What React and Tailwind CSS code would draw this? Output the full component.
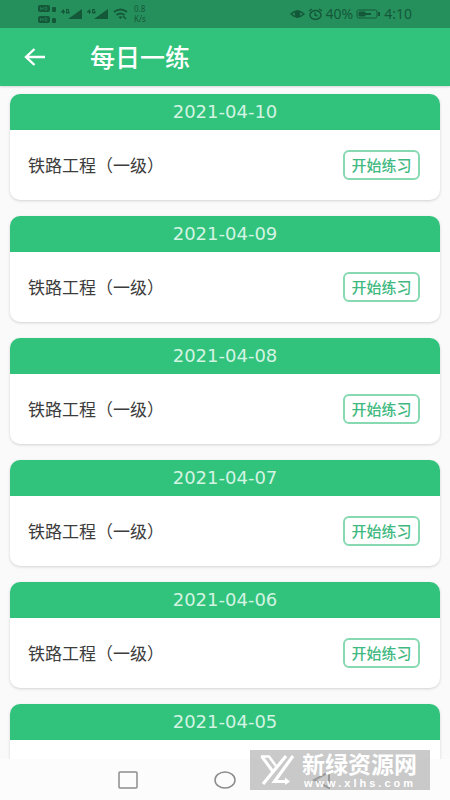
import React from 'react';

const exercises = [
    { date: '2021-04-10', title: '铁路工程（一级）' },
    { date: '2021-04-09', title: '铁路工程（一级）' },
    { date: '2021-04-08', title: '铁路工程（一级）' },
    { date: '2021-04-07', title: '铁路工程（一级）' },
    { date: '2021-04-06', title: '铁路工程（一级）' },
    { date: '2021-04-05', title: '铁路工程（一级）' },
];

const SignalIcon = () => (
    <svg width="22" height="12" viewBox="0 0 22 12" fill="currentColor" aria-hidden="true">
        <path d="M0 3.500 3 1v2h1v1.500H3V6H2V4.500H0zM5 1h3v1.500H6V4h1V3h1.500v2.500H5z" />
        <path d="M7 11 21 1v10z" />
    </svg>
);

const StatusBar = () => (
    <div className="flex h-7 shrink-0 items-center justify-between bg-[#26905c] px-[38px] text-[#14583a]">
        <div className="flex items-center gap-1">
            <svg width="19" height="20" viewBox="0 0 19 20" fill="currentColor" aria-hidden="true">
                <rect x="0" y="1" width="12" height="7" rx="2" />
                <rect x="0" y="12" width="12" height="7" rx="2" />
                <path d="M2.500 3v3M5 3v3M2.500 4.500H5M7 3v3h1.500q1-1.500 0-3zM2.500 14v3M5 14v3M2.500 15.500H5M7 14v3h1.500q1-1.500 0-3z" stroke="#26905c" strokeWidth=".6" fill="none" />
                <rect x="14" y="3" width="4" height="5" rx="1" />
                <rect x="14" y="14" width="4" height="5" rx="1" />
            </svg>
            <SignalIcon />
            <SignalIcon />
            <svg width="15" height="12" viewBox="0 0 15 12" fill="none" stroke="currentColor" strokeWidth="2" aria-hidden="true">
                <path d="M1 4q6.500-5 13 0M3.500 7q4-3 8 0" />
                <path d="m5.500 9 2 2 2-2q-2-1.500-4 0" fill="currentColor" stroke="none" />
                <path d="m10 8 3 3" strokeWidth="1.500" />
            </svg>
            <div className="ml-0.5 flex flex-col text-[8px] leading-[10px]">
                <span>0.8</span>
                <span>K/s</span>
            </div>
        </div>
        <div className="flex items-center gap-[3px] text-sm leading-none">
            <svg width="15" height="12" viewBox="0 0 15 12" fill="none" stroke="currentColor" strokeWidth="1.500" aria-hidden="true">
                <path d="M1 6q6.500-6 13 0-6.500 6-13 0z" />
                <ellipse cx="7.500" cy="6" rx="2" ry="3" fill="currentColor" />
            </svg>
            <svg width="15" height="13" viewBox="0 0 15 13" fill="none" stroke="currentColor" strokeWidth="1.500" aria-hidden="true">
                <ellipse cx="7.500" cy="7" rx="5.500" ry="4.500" />
                <path d="M1 3l3-2M14 3l-3-2M7 4.500V7l2.500 1" />
            </svg>
            <span>40%</span>
            <svg width="25" height="10" viewBox="0 0 25 10" fill="none" stroke="currentColor" aria-hidden="true">
                <rect x="1" y="1" width="20" height="8" rx="1.500" />
                <path d="M3 3h6v4H3z" fill="currentColor" />
                <path d="M9 5h6" strokeWidth="2" />
                <path d="M23 3v4" strokeWidth="2" />
            </svg>
            <span>4:10</span>
        </div>
    </div>
);

const ExerciseCard = ({ date, title }) => (
    <article className="shrink-0 overflow-hidden rounded-[10px] bg-white shadow-[0_1px_3px_rgba(0,0,0,0.16)]">
        <h2 className="flex h-9 items-center justify-center bg-[#31c27c] font-['DejaVu_Sans',sans-serif] text-lg text-[#d3f4e2]">
            {date}
        </h2>
        <div className="flex h-[70px] items-center justify-between pr-5 pl-[18px]">
            <span className="pt-0.5 text-[17px] text-[#3c3c3c]">{title}</span>
            <button type="button" className="h-[30px] w-[77px] rounded-md border-2 border-[#87d9b1] text-[15px] leading-none font-medium text-[#3fb97f]">
                开始练习
            </button>
        </div>
    </article>
);

const Watermark = () => (
    <div className="absolute right-5 bottom-2.5 flex h-10 w-[180px] items-center bg-[#b4b4b4]/70 pl-2.5 text-white">
        <svg width="34" height="30" viewBox="0 0 34 30" fill="none" stroke="currentColor" aria-hidden="true">
            <path d="M1.500 1 12.500 16" strokeWidth="3" />
            <path d="M1 1.500h8L16 11" strokeWidth="2.500" />
            <path d="M26 1 3 29" strokeWidth="3.200" />
            <path d="M33 1 14.500 26.500H26" strokeWidth="3.200" />
            <path d="M25 22.500 30 26.500 25 30z" fill="currentColor" stroke="none" />
        </svg>
        <div className="ml-2 flex flex-col">
            <span className="text-[23px] leading-[26px] font-bold whitespace-nowrap">新绿资源网</span>
            <span className="pl-0.5 font-['Liberation_Sans',sans-serif] text-[11px] leading-3 font-bold tracking-[3px]">www.xlhs.com</span>
        </div>
    </div>
);

const App = () => {
    return (
        <div className="relative flex h-screen flex-col overflow-hidden bg-[#fafafa] font-['Noto_Sans','Noto_Sans_CJK_SC',sans-serif]">
            <StatusBar />
            <header className="flex h-[58px] shrink-0 items-center bg-[#31c27c] pl-6 text-white shadow-[0_1px_2px_rgba(0,0,0,0.15)]">
                <button type="button" aria-label="返回">
                    <svg width="21" height="18" viewBox="0 0 21 18" fill="none" stroke="currentColor" strokeWidth="2.400" aria-hidden="true">
                        <path d="M10.500 1 2 9l8.500 8M2 9h19" />
                    </svg>
                </button>
                <h1 className="ml-[45px] text-[25px] leading-none font-medium">每日一练</h1>
            </header>

            <main className="flex min-h-0 flex-1 flex-col gap-4 overflow-hidden px-2.5 pt-2">
                {exercises.map((item) => (
                    <ExerciseCard key={item.date} date={item.date} title={item.title} />
                ))}
            </main>

            <nav className="flex h-[41px] shrink-0 items-center justify-center gap-[76px] bg-[#fcfcfc] text-[#8c8c8c]">
                <button type="button" aria-label="最近任务">
                    <svg width="20" height="18" viewBox="0 0 20 18" fill="none" stroke="currentColor" strokeWidth="1.500" aria-hidden="true">
                        <rect x="1" y="1" width="18" height="16" rx="1" />
                    </svg>
                </button>
                <button type="button" aria-label="主页">
                    <svg width="22" height="18" viewBox="0 0 22 18" fill="none" stroke="currentColor" strokeWidth="1.500" aria-hidden="true">
                        <ellipse cx="11" cy="9" rx="10" ry="8" />
                    </svg>
                </button>
                <button type="button" aria-label="后退" className="text-[#5c5c5c]">
                    <svg width="20" height="18" viewBox="0 0 20 18" fill="none" stroke="currentColor" strokeWidth="2" aria-hidden="true">
                        <path d="M17 1v16L2 9z" />
                    </svg>
                </button>
            </nav>

            <Watermark />
        </div>
    );
};

export default App;
